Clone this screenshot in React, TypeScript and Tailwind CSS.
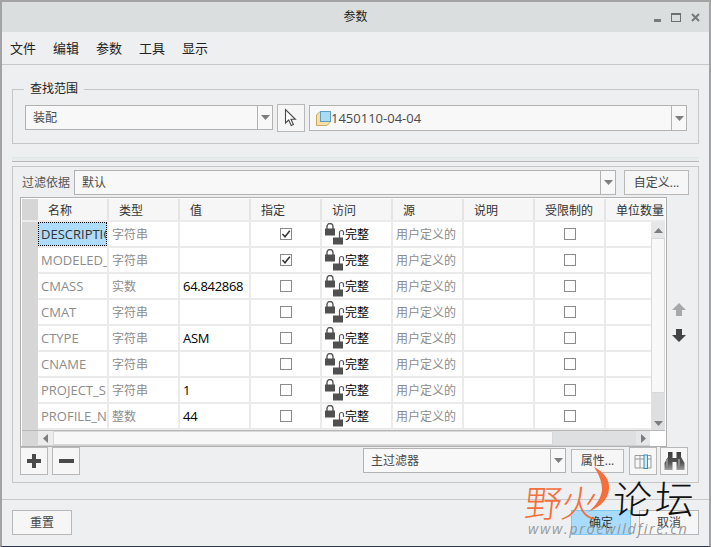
const rows = [
  { name: 'DESCRIPTION', type: '字符串', value: '', set: true, active: true },
  { name: 'MODELED_BY', type: '字符串', value: '', set: true },
  { name: 'CMASS', type: '实数', value: '64.842868', set: false },
  { name: 'CMAT', type: '字符串', value: '', set: false },
  { name: 'CTYPE', type: '字符串', value: 'ASM', set: false },
  { name: 'CNAME', type: '字符串', value: '', set: false },
  { name: 'PROJECT_S', type: '字符串', value: '1', set: false },
  { name: 'PROFILE_NUM', type: '整数', value: '44', set: false },
];

const headers = ['名称', '类型', '值', '指定', '访问', '源', '说明', '受限制的'];

const Arrow = ({ up = false }: { up?: boolean }) => (
  <svg width="9" height="5" viewBox="0 0 9 5" className={up ? 'rotate-180' : ''}>
    <path d="M0 0H9L4.5 5Z" fill="#7d7d7d" />
  </svg>
);

const Combo = ({ text, className, children }: { text: string; className: string; children?: React.ReactNode }) => (
  <div className={`flex border border-[#b2b2b2] bg-[#f8f8f8] ${className}`}>
    <div className="flex flex-1 items-center overflow-hidden pl-[7px] pt-px text-[#4a4a4a]">
      {children}
      {text}
    </div>
    <div className="flex w-[15px] shrink-0 items-center justify-center border-l border-[#b2b2b2]">
      <Arrow />
    </div>
  </div>
);

const Check = ({ on }: { on: boolean }) => (
  <div className="flex h-3 w-3 items-center justify-center border border-[#8a8a8a] bg-white">
    {on && (
      <svg width="10" height="10" viewBox="0 0 10 10">
        <path d="M1.5 5L4 7.8L8.8 1.8" fill="none" stroke="#333" strokeWidth="1.5" />
      </svg>
    )}
  </div>
);

const Locks = () => (
  <svg width="21" height="22" viewBox="0 0 21 22" className="shrink-0">
    <path d="M3 6V3.5A3 3 0 0 1 9 3.5V6" fill="none" stroke="#555" strokeWidth="1.4" />
    <rect x="1" y="5.5" width="10" height="7" fill="#505050" />
    <path d="M15.5 15V9.5A2 2 0 0 1 19.5 9.5V12" fill="none" stroke="#555" strokeWidth="1.2" />
    <rect x="9" y="14.5" width="10" height="7" fill="#505050" />
  </svg>
);

const Row = ({ row }: { row: (typeof rows)[number] }) => (
  <div className="flex h-[26px] border-b-2 border-[#ebebeb] bg-white">
    <div className="w-[71px] shrink-0 border-r-2 border-[#ebebeb] text-[13px]">
      <div
        className={`flex h-full items-center overflow-hidden whitespace-nowrap ${
          row.active ? 'border border-dotted border-black bg-[#aedcfc] pl-[2px] text-[#333]' : 'pl-[3px] text-[#8c8c8c]'
        }`}
      >
        {row.name}
      </div>
    </div>
    <div className="flex w-[71px] shrink-0 items-center border-r-2 border-[#ebebeb] pl-[3px] pt-px text-[#8c8c8c]">{row.type}</div>
    <div className="flex w-[71px] shrink-0 items-center border-r-2 border-[#ebebeb] pl-[3px] text-[13px] tracking-[-0.3px] text-black">{row.value}</div>
    <div className="flex w-[71px] shrink-0 items-center justify-center border-r-2 border-[#ebebeb]">
      <Check on={row.set} />
    </div>
    <div className="flex w-[71px] shrink-0 items-center border-r-2 border-[#ebebeb] pl-[2px] text-black">
      <Locks />
      <span className="pt-px">完整</span>
    </div>
    <div className="flex w-[71px] shrink-0 items-center border-r-2 border-[#ebebeb] pl-[3px] pt-px text-[#8c8c8c]">用户定义的</div>
    <div className="w-[71px] shrink-0 border-r-2 border-[#ebebeb]" />
    <div className="flex w-[71px] shrink-0 items-center justify-center border-r-2 border-[#ebebeb]">
      <Check on={false} />
    </div>
    <div className="flex-1" />
  </div>
);

const Watermark = () => (
  <div className="pointer-events-none absolute left-[518px] top-[460px] h-[85px] w-[185px]">
    <svg width="40" height="60" viewBox="0 0 40 60" className="absolute left-[62px] top-0">
      <path d="M12 5C22 10 28 18 27 27C26 38 18 45 6 50C14 44 19 36 20 28C20 20 17 12 12 5Z" fill="#f3703c" />
    </svg>
    <div className="absolute left-[5px] top-[18px] text-[37px] font-light leading-[46px] text-[#f3703c] -skew-x-6">
      野<span className="-ml-px">火</span>
    </div>
    <div className="absolute left-[93px] top-[14px] text-[39px] font-light leading-[46px] text-[#111] -skew-x-3">
      论<span className="ml-[3px]">坛</span>
    </div>
    <div className="absolute left-[8px] top-[57px] whitespace-nowrap text-[14.5px] font-medium italic leading-5 tracking-[1.6px] text-[#8f8f8f]/90">
      www.proewildfire.cn
    </div>
  </div>
);

export default function App() {
  return (
    <div className="relative h-[547px] w-[711px] overflow-hidden border-x-2 border-t-2 border-b border-x-[#a3a3a3] border-t-[#a3a3a3] border-b-[#2d3b4e] bg-[#eeeff1] font-['Open_Sans','Noto_Sans_CJK_SC',sans-serif] text-[12px] leading-none text-[#333]">
      <div className="relative flex h-[30px] items-center justify-center bg-[#dbdede] text-[#222]">
        参数
        <div className="absolute right-[9px] top-[11px] flex items-center gap-[10px]">
          <div className="mt-[6px] h-[3px] w-[7px] bg-[#7a7a7a]" />
          <div className="h-[9px] w-[10px] border border-t-2 border-[#6f6f6f]" />
          <svg width="9" height="9" viewBox="0 0 9 9">
            <path d="M1 1L8 8M8 1L1 8" stroke="#777" strokeWidth="2" />
          </svg>
        </div>
      </div>

      <div className="flex h-[33px] items-center gap-[17px] border-b border-[#c8c8c8] pl-[8px] pt-px text-[13px] text-[#222]">
        <span>文件</span>
        <span>编辑</span>
        <span>参数</span>
        <span>工具</span>
        <span>显示</span>
      </div>

      <div className="pl-[10px] pr-[10px]">
        <fieldset className="mt-[15px] h-[64px] w-[687px] border border-[#c6c6c6]">
          <legend className="ml-[11px] px-[6px] leading-[18px] text-[#222]">查找范围</legend>
          <div className="ml-[12px] mt-[7px] flex items-start">
            <Combo text="装配" className="h-[25px] w-[248px]" />
            <div className="ml-[4px] flex h-[28px] w-[28px] -translate-y-px items-center justify-center border border-[#b8b8b8] bg-[#f6f6f6]">
              <svg width="16" height="20" viewBox="0 0 16 20">
                <path d="M2.5 1.5V15L5.8 12L8.2 17.6L10.4 16.6L8 11.3H12.4Z" fill="#fff" stroke="#4a4a4a" strokeWidth="1.1" />
              </svg>
            </div>
            <Combo text="" className="ml-[4px] h-[26px] w-[378px]">
              <svg width="15" height="15" viewBox="0 0 15 15" className="shrink-0 -ml-px">
                <path d="M0.5 4L4 0.5H14.5V10.5L11 14.5H0.5Z" fill="#f8dfa8" stroke="#cda765" />
                <rect x="4.5" y="0.5" width="10" height="10" fill="#a9dcf2" stroke="#5d9fc0" />
              </svg>
              <span className="text-[13px]">1450110-04-04</span>
            </Combo>
          </div>
        </fieldset>

        <div className="mt-[13px] h-[5px] w-[687px] border-t border-b border-t-[#dbe8e6] border-b-[#b9b9b9] bg-[#e8eaec]" />

        <div className="mt-[4px] h-[317px] w-[687px] border border-[#c6c6c6] pl-[7px] pt-[3px]">
          <div className="flex h-[25px] items-start">
            <span className="ml-[2px] mt-[7px] w-[52px] text-[#555]">过滤依据</span>
            <Combo text="默认" className="h-[25px] w-[542px]" />
            <div className="ml-[8px] flex h-[25px] w-[65px] items-center justify-center border border-[#b8b8b8] bg-[#f6f6f6] text-[#444]">
              自定义...
            </div>
          </div>

          <div className="mt-[2px] flex">
            <div className="h-[250px] w-[647px] shrink-0 border border-[#b0b0b0] bg-white p-px">
              <div className="flex h-[23px] border-b-2 border-[#ebebeb] bg-[#f6f6f6]">
                <div className="w-[16px] shrink-0 bg-[#d6d6d6]" />
                {headers.map((h) => (
                  <div key={h} className="flex w-[71px] shrink-0 items-center border-r-2 border-[#e4e4e4] pl-[10px] pt-[3px] text-[#333]">
                    {h}
                  </div>
                ))}
                <div className="flex flex-1 items-center overflow-hidden whitespace-nowrap pl-[10px] pt-[3px] text-[#333]">单位数量</div>
              </div>
              <div className="flex h-[209px] border-b border-[#b8b8b8]">
                <div className="w-[16px] shrink-0 bg-[#d6d6d6]" />
                <div className="w-[613px] shrink-0">
                  {rows.map((r) => (
                    <Row key={r.name} row={r} />
                  ))}
                </div>
                <div className="flex w-[14px] shrink-0 flex-col bg-[#dedfe0]">
                  <div className="flex h-[16px] items-center justify-center bg-[#e6e7e8]">
                    <Arrow up />
                  </div>
                  <div className="h-[155px] border border-[#d8d8d8] bg-[#f8f8f8]" />
                  <div className="flex-1" />
                  <div className="flex h-[13px] items-center justify-center">
                    <Arrow />
                  </div>
                </div>
              </div>
              <div className="flex h-[15px]">
                <div className="w-[16px] shrink-0 bg-[#d6d6d6]" />
                <div className="flex w-[612px] shrink-0 border-b border-[#d0d0d0] bg-[#dedfe0]">
                  <div className="flex w-[15px] items-center justify-center bg-[#ececec]">
                    <svg width="5" height="9" viewBox="0 0 5 9">
                      <path d="M5 0V9L0 4.5Z" fill="#7d7d7d" />
                    </svg>
                  </div>
                  <div className="w-[500px] border border-[#d8d8d8] bg-[#f8f8f8]" />
                  <div className="flex-1" />
                  <div className="flex w-[14px] items-center justify-center bg-[#e6e7e8]">
                    <svg width="5" height="9" viewBox="0 0 5 9">
                      <path d="M0 0V9L5 4.5Z" fill="#7d7d7d" />
                    </svg>
                  </div>
                </div>
              </div>
            </div>
            <div className="flex w-[24px] flex-col items-center justify-center gap-[13px]">
              <svg width="14" height="13" viewBox="0 0 14 13">
                <path d="M7 0L14 7H10V13H4V7H0Z" fill="#a8a8a8" />
              </svg>
              <svg width="14" height="13" viewBox="0 0 14 13">
                <path d="M7 13L14 6H10V0H4V6H0Z" fill="#444" />
              </svg>
            </div>
          </div>

          <div className="flex h-[28px] items-start">
            <div className="flex h-[28px] w-[28px] items-center justify-center border border-[#b8b8b8] bg-[#f6f6f6]">
              <svg width="16" height="16" viewBox="0 0 16 16">
                <path d="M6 1H10V6H15V10H10V15H6V10H1V6H6Z" fill="#4a4a4a" />
              </svg>
            </div>
            <div className="ml-[4px] flex h-[28px] w-[28px] items-center justify-center border border-[#b8b8b8] bg-[#f6f6f6]">
              <div className="h-[4px] w-[15px] bg-[#4a4a4a]" />
            </div>
            <Combo text="主过滤器" className="ml-[283px] mt-px h-[25px] w-[203px]" />
            <div className="ml-[5px] mt-[2px] flex h-[24px] w-[53px] items-center justify-center border border-[#b8b8b8] bg-[#f6f6f6] text-[#444]">
              属性...
            </div>
            <div className="ml-[5px] flex h-[28px] w-[28px] items-center justify-center border border-[#b8b8b8] bg-[#f6f6f6]">
              <svg width="18" height="15" viewBox="0 0 18 15">
                <path d="M1 1.5H17M1 5H17M1 14H17M1 1.5V14M6 1.5V14M17 1.5V14" fill="none" stroke="#9a9a9a" />
                <rect x="10" y="1" width="3.5" height="13.5" fill="#cfeafa" stroke="#2f8fc8" />
              </svg>
            </div>
            <div className="ml-[3px] flex h-[28px] w-[28px] items-center justify-center border border-[#b8b8b8] bg-[#f6f6f6]">
              <svg width="21" height="20" viewBox="0 0 21 20">
                <defs>
                  <linearGradient id="bino" x1="0" y1="0" x2="0" y2="1">
                    <stop offset="0" stopColor="#3a3a3a" />
                    <stop offset="0.6" stopColor="#555" />
                    <stop offset="1" stopColor="#a0a0a0" />
                  </linearGradient>
                </defs>
                <path d="M4 1H8.5V7H12.5V1H17V6L20.5 12V19H12.5V11H8.5V19H0.5V12L4 6Z" fill="url(#bino)" />
                <rect x="2" y="8" width="2" height="8" fill="#8a8a8a" />
                <rect x="14" y="8" width="2" height="8" fill="#8a8a8a" />
              </svg>
            </div>
          </div>
        </div>
      </div>

      <div className="mt-[16px] border-t border-[#c8c8c8]" />
      <div className="flex px-[10px] pt-[10px]">
        <div className="flex h-[25px] w-[60px] items-center justify-center border border-[#b8b8b8] bg-[#f6f6f6] text-[#444]">重置</div>
        <div className="ml-[499px] flex h-[25px] w-[60px] items-center justify-center border border-[#7fc8f5] bg-[#a9dcfc] text-[#333]">确定</div>
        <div className="ml-[8px] flex h-[25px] w-[60px] items-center justify-center border border-[#b8b8b8] bg-[#f6f6f6] text-[#444]">取消</div>
      </div>

      <Watermark />
    </div>
  );
}
